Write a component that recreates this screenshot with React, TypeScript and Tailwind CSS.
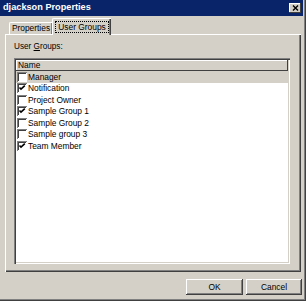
import React from 'react';

const groups = [
  { name: 'Manager', checked: false, selected: true },
  { name: 'Notification', checked: true },
  { name: 'Project Owner', checked: false },
  { name: 'Sample Group 1', checked: true },
  { name: 'Sample Group 2', checked: false },
  { name: 'Sample group 3', checked: false },
  { name: 'Team Member', checked: true },
];

const CheckBox = ({ checked }: { checked: boolean }) => (
  <div className="w-[10px] h-[10px] bg-white shrink-0 shadow-[inset_1px_1px_#808080,inset_-1px_-1px_#ffffff,inset_2px_2px_#404040] relative">
    {checked && (
      <svg width="10" height="10" viewBox="0 0 10 10" className="absolute inset-0">
        <path d="M2.5 4.5 L4 6.2 L7.8 2.6" stroke="#000" strokeWidth="1.6" fill="none" />
      </svg>
    )}
  </div>
);

export default function App() {
  return (
    <div className="w-[306px] h-[301px] bg-[#d4d0c8] flex flex-col pr-[3px] pb-[2px] shadow-[inset_-1px_-1px_#404040,inset_-2px_-2px_#808080] font-['Liberation_Sans',Arial,sans-serif] text-black select-none">
      {/* title bar */}
      <div className="h-[16px] bg-[#0a246a] flex items-center justify-between pl-[3px] pr-[2px]">
        <span className="text-white font-bold text-[9.2px] leading-none">djackson Properties</span>
        <div className="w-[12px] h-[10px] bg-[#d4d0c8] flex items-center justify-center shadow-[inset_-1px_-1px_#404040,inset_1px_1px_#ffffff]">
          <svg width="7" height="6" viewBox="0 0 7 6">
            <path d="M1 0.5 L6 5.5 M6 0.5 L1 5.5" stroke="#000" strokeWidth="1.4" />
          </svg>
        </div>
      </div>

      {/* tabs */}
      <div className="h-[18px] flex items-end pl-[9px] text-[8.4px] leading-none">
        <div className="h-[12px] w-[43px] flex items-center justify-center border-l border-t border-white shadow-[inset_-1px_0_#808080] rounded-tl-[2px]">
          Properties
        </div>
        <div className="h-[17px] w-[59px] mb-[-1px] z-10 bg-[#d4d0c8] flex items-center justify-center border-l border-t border-white shadow-[inset_-1px_0_#404040,inset_-2px_0_#808080] rounded-tl-[2px]">
          <span className="border border-dotted border-black px-[2px] py-[1px]">User Groups</span>
        </div>
      </div>

      {/* panel */}
      <div className="ml-[5px] mr-[2px] h-[238px] flex flex-col pl-[8px] pr-[11px] border-l border-t border-white shadow-[inset_-1px_-1px_#404040,inset_-2px_-2px_#808080]">
        <div className="mt-[7px] h-[10px] text-[8.2px] leading-[10px]">
          User <span className="underline">G</span>roups:
        </div>
        <div className="mt-[6px] h-[206px] bg-white flex flex-col p-[2px] shadow-[inset_1px_1px_#808080,inset_2px_2px_#404040,inset_-1px_-1px_#ffffff,inset_-2px_-2px_#d4d0c8]">
          <div className="h-[11px] bg-[#d4d0c8] flex items-center pl-[2px] text-[8.4px] leading-none shadow-[inset_-1px_-1px_#404040,inset_1px_1px_#ffffff]">
            Name
          </div>
          {groups.map((g) => (
            <div
              key={g.name}
              className={`h-[11.5px] flex items-center gap-[1px] pl-[1px] text-[8.4px] leading-none ${g.selected ? 'bg-[#d4d0c8]' : ''}`}
            >
              <CheckBox checked={g.checked} />
              <span>{g.name}</span>
            </div>
          ))}
        </div>
      </div>

      {/* buttons */}
      <div className="mt-[7px] flex justify-end gap-[3px] pr-[1px] text-[8.4px] leading-none">
        <div className="w-[57px] h-[16px] flex items-center justify-center shadow-[inset_-1px_-1px_#404040,inset_1px_1px_#ffffff,inset_-2px_-2px_#808080]">
          OK
        </div>
        <div className="w-[56px] h-[16px] flex items-center justify-center shadow-[inset_-1px_-1px_#404040,inset_1px_1px_#ffffff,inset_-2px_-2px_#808080]">
          Cancel
        </div>
      </div>
    </div>
  );
}
